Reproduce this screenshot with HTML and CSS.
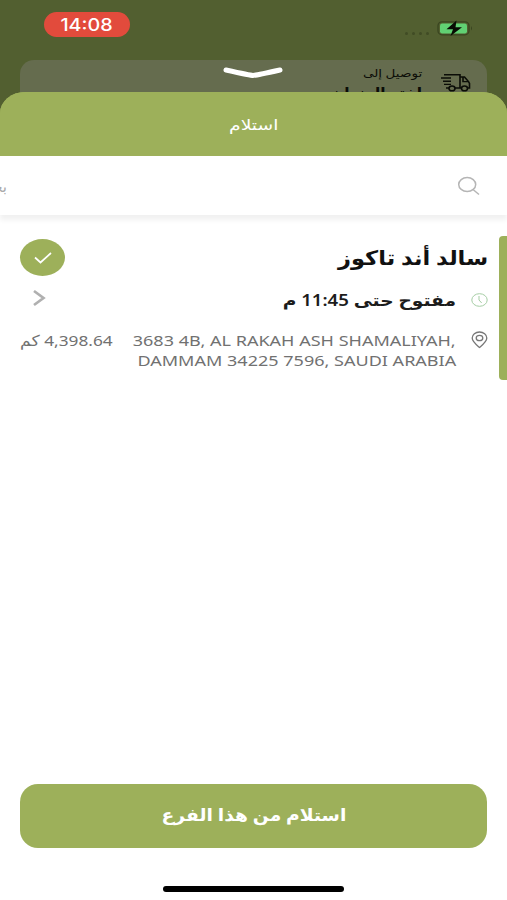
FILE: index.html
```html
<!DOCTYPE html>
<html lang="ar" dir="rtl">
<head>
<meta charset="utf-8">
<title>استلام</title>
<link rel="stylesheet" href="styles.css">
</head>
<body>
<div class="screen">
  <div class="status">
    <div class="battery">
      <svg width="38" height="18" viewBox="0 0 38 18"><rect x="2" y="2.800" width="31" height="13" rx="4" fill="none" stroke="#3a4520" stroke-width="1.300"/><rect x="4" y="4.500" width="27" height="10" rx="2.200" fill="#61d173"/><path d="M35 7v4.500q2-2.200 0-4.500z" fill="#3a4520"/><path d="M20.500 1.500 10.500 10.300h6.500L14.500 17 26 8.200h-6.500z" fill="#080c04"/></svg>
    </div>
    <div class="signal"><i></i><i></i><i></i><i></i></div>
    <div class="time"><span class="t">14:08</span></div>
  </div>
  <div class="delivery">
    <svg class="truck" width="31" height="20" viewBox="0 0 31 22" preserveAspectRatio="none" fill="none" stroke="#0b0d07" stroke-width="1.600"><path d="M4 2h16v14.500M1 5.500h10M3 9h8M4 12.500h7M6 16.500h3M15 16.500h6.500M20 4.500h4.500l4 5 1 2v5h-2M23 5v4.500h5"/><ellipse cx="12" cy="17" rx="3" ry="2.600"/><ellipse cx="24.500" cy="17" rx="3" ry="2.600"/></svg>
    <div class="delivery-text"><span class="t to">توصيل إلى</span><span class="t address-title">اختر العنوان</span></div>
  </div>
  <svg class="grabber" width="62" height="14" viewBox="0 0 62 14"><path d="M4 4Q29 9.500 31 9.500T58 4" fill="none" stroke="#fff" stroke-width="5" stroke-linecap="round"/></svg>
  <div class="sheet">
    <div class="title"><span class="t">استلام</span></div>
    <div class="search">
      <svg width="23" height="20" viewBox="0 0 23 20" fill="none" stroke="#b5b5b5" stroke-width="1.500"><ellipse cx="10.200" cy="8.500" rx="8.500" ry="7"/><path d="M16 13.500 22 18.500"/></svg>
      <span class="t hint">بحث</span>
    </div>
    <div class="branch">
      <div class="info">
        <div class="name"><span class="t">سالد أند تاكوز</span></div>
        <div class="hours">
          <svg width="17" height="14" viewBox="0 0 17 14" fill="none" stroke="#a5cda4" stroke-width="1"><ellipse cx="8.500" cy="7" rx="7.700" ry="6.300"/><path d="M8 3v4l2.700 3"/></svg>
          <span class="t">مفتوح حتى 11:45 م</span>
        </div>
        <div class="place">
          <svg width="17" height="18" viewBox="0 0 17 18" fill="none" stroke="#777" stroke-width="1.300"><path d="M8.500 16.500C5 13.500 1.200 10.500 1.200 7a7.300 6 0 0 1 14.600 0c0 3.500-3.800 6.500-7.300 9.500z"/><ellipse cx="8.500" cy="7" rx="3.300" ry="2.700"/></svg>
          <div class="lines" dir="ltr"><span class="t line1">3683 4B, AL RAKAH ASH SHAMALIYAH,</span><span class="t line2">DAMMAM 34225 7596, SAUDI ARABIA</span></div>
        </div>
      </div>
      <div class="side">
        <div class="check"><svg width="20" height="14" viewBox="0 0 20 14"><path d="M2 6.500 7.500 11.500 18 2" fill="none" stroke="#fff" stroke-width="1.700"/></svg></div>
        <svg class="chevron" width="14" height="18" viewBox="0 0 14 18"><path d="M2 2 11.500 9 2 16" fill="none" stroke="#b0b0b0" stroke-width="2.700"/></svg>
        <div class="distance"><span class="t">4,398.64 كم</span></div>
      </div>
      <div class="marker"></div>
    </div>
    <div class="footer">
      <div class="button"><span class="t">استلام من هذا الفرع</span></div>
      <div class="home"></div>
    </div>
  </div>
</div>
</body>
</html>
```
FILE: styles.css
```css
* { box-sizing: border-box; }
body { margin: 0; background: #fff; font-family: "Noto Sans", "DejaVu Sans", sans-serif; }
svg { display: block; flex: none; }
.t { display: block; width: max-content; white-space: nowrap; transform-origin: right center; }
.screen { position: relative; width: 507px; height: 900px; overflow: hidden; display: flex; flex-direction: column; background: #525f30; }
.status { height: 60px; flex: none; display: flex; align-items: flex-start; padding: 12px 33px 0 44px; }
.battery { padding-top: 7px; }
.signal { display: flex; gap: 4px; padding: 20px 0 0; margin-right: 7px; }
.signal i { width: 3px; height: 3px; border-radius: 50%; background: #414c25; }
.time { margin-right: auto; width: 86px; height: 25px; border-radius: 13px; background: #e24b3c; color: #fff; display: flex; align-items: center; justify-content: center; font: 500 17px/25px Inter, sans-serif; }
.time .t { transform: translateY(1px) scaleX(1.16); transform-origin: center; }
.delivery { height: 50px; flex: none; margin: 0 20px; padding: 5px 16px 0; border-radius: 14px 14px 0 0; background: #656c4e; display: flex; gap: 18px; color: #0b0d07; }
.truck { margin-top: 8px; }
.delivery-text { line-height: 16px; font-size: 11px; }
.to { transform: scaleX(1.23); }
.address-title { font-size: 14px; font-weight: 700; line-height: 24px; transform: scaleX(1.11); }
.grabber { position: absolute; left: 222px; top: 66px; }
.sheet { flex: 1; margin-top: -18px; position: relative; background: linear-gradient(#9db05a 60px, #fff 60px); border-radius: 25px 25px 0 0 / 21px 21px 0 0; overflow: hidden; display: flex; flex-direction: column; }
.title { height: 64px; flex: none; background: #9db05a; color: #fff; display: flex; align-items: center; justify-content: center; font-size: 15px; }
.title .t { transform: scaleX(1.25); transform-origin: center; }
.search { height: 59px; flex: none; padding: 0 27px 0 0; display: flex; align-items: center; justify-content: space-between; background: #fff; box-shadow: 0 5px 5px #f1f1f1; }
.hint { color: #aaa; font-size: 15px; width: 7px; }
.branch { height: 145px; margin-top: 21px; flex: none; display: flex; position: relative; }
.marker { position: absolute; right: 0; top: 0; width: 8px; height: 144px; border-radius: 4px 0 0 4px; background: #9db05a; }
.info { flex: 1; padding-right: 19px; }
.name { height: 44px; line-height: 43px; font-size: 20px; font-weight: 700; color: #111; }
.name .t { transform: scaleX(1.128); }
.hours { height: 40px; display: flex; align-items: center; gap: 15px; font-size: 16px; font-weight: 600; color: #1c1c1c; }
.hours .t { transform: scaleX(1.163); }
.place { display: flex; gap: 15px; padding-top: 10px; color: #717171; font-size: 15px; }
.place svg { margin-top: 1px; }
.lines { line-height: 20px; display: flex; flex-direction: column; align-items: flex-end; width: 323px; }
.lines .t { transform: scaleX(1.202); }
.side { width: 130px; padding: 3px 0 0 20px; display: flex; flex-direction: column; align-items: flex-end; }
.check { width: 45px; height: 37px; border-radius: 50%; background: #9db05a; display: flex; align-items: center; justify-content: center; }
.chevron { margin: 13px 0 0 12px; }
.distance { margin-top: 23px; line-height: 20px; font-size: 15px; color: #717171; }
.distance .t { transform: scaleX(1.15); transform-origin: left center; }
.footer { margin-top: auto; height: 116px; padding: 0 20px; display: flex; flex-direction: column; align-items: center; }
.button { width: 467px; height: 64px; padding-bottom: 4px; border-radius: 18px; background: #9db05a; color: #fff; display: flex; align-items: center; justify-content: center; font-size: 17px; font-weight: 700; }
.button .t { transform: scaleX(1.1); transform-origin: center; }
.home { width: 181px; height: 6px; margin-top: 38px; border-radius: 3px; background: #000; }
```
